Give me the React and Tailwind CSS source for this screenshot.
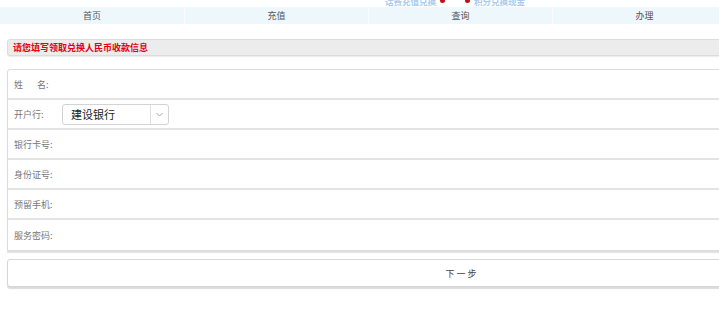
import React from "react";

const font = { fontFamily: '"Noto Sans CJK SC", "Noto Sans", sans-serif' };

const navItems = ["首页", "充值", "查询", "办理"];

const rows = [
  { label: "姓名:" },
  { label: "开户行:", select: true },
  { label: "银行卡号:" },
  { label: "身份证号:" },
  { label: "预留手机:" },
  { label: "服务密码:" },
];

// Bank select
const BankSelect = () => (
  <div className="ml-[5px] flex h-[21px] w-[107px] items-center rounded-[3px] border border-[#d3d3d3] bg-white">
    <span className="flex-1 pl-[8px] text-[11px] leading-none text-[#222]">建设银行</span>
    <span className="flex h-full w-[18px] items-center justify-center border-l border-[#dedede]">
      <svg width="7" height="5" viewBox="0 0 7 5" fill="none" stroke="#9a9a9a" strokeWidth="0.9">
        <path d="M0.5 1 L3.5 4 L6.5 1" />
      </svg>
    </span>
  </div>
);

export default function App() {
  return (
    <div className="relative h-[316px] w-[719px] overflow-hidden bg-white" style={font}>
      {/* banner remnant */}
      <div className="h-[7px] overflow-hidden">
        <div className="-mt-[5px] ml-[385px] flex h-[10px] w-[150px] items-end gap-[4px] text-[8.5px] font-bold leading-none text-[#a9cbed]">
          <span className="whitespace-nowrap">话费充值兑换</span>
          <span className="mb-[2px] h-[5px] w-[5px] rounded-full bg-[#c0101a]" />
          <span className="w-[12px]" />
          <span className="mb-[2px] h-[5px] w-[5px] rounded-full bg-[#c0101a]" />
          <span className="whitespace-nowrap">积分兑换现金</span>
        </div>
      </div>

      {/* nav */}
      <div className="flex h-[17px] w-[736px] bg-[#eef7fc]">
        {navItems.map((item, i) => (
          <div
            key={item}
            className={`flex w-[184px] items-center justify-center text-[9px] leading-none text-[#555] ${
              i > 0 ? "border-l border-[#fafdff]" : ""
            }`}
          >
            {item}
          </div>
        ))}
      </div>

      <div className="w-[904px] pl-[7px] pt-[15px]">
        {/* header */}
        <div className="flex h-[17px] items-center rounded-l-[3px] border border-[#dcdcdc] bg-[#ececec] pl-[5px] shadow-[0_1px_1px_rgba(0,0,0,0.08)]">
          <span className="text-[9px] font-bold leading-none text-[#e60012]">请您填写领取兑换人民币收款信息</span>
        </div>

        {/* form */}
        <div className="mt-[13px] rounded-tl-[3px] border border-[#dcdcdc] bg-white shadow-[0_2px_1px_rgba(0,0,0,0.12)]">
          {rows.map((row, i) => (
            <div
              key={i}
              className={`flex h-[30px] items-center pl-[6px] ${
                i < rows.length - 1 ? "border-b-2 border-[#e3e3e3]" : ""
              }`}
            >
              {i === 0 ? (
                <span className="flex w-[43px] text-[9px] leading-none text-[#777]">
                  <span className="w-[23px]">姓</span>
                  <span>名:</span>
                </span>
              ) : (
                <span className="w-[43px] whitespace-nowrap text-[9px] leading-none text-[#777]">{row.label}</span>
              )}
              {row.select && <BankSelect />}
            </div>
          ))}
        </div>

        {/* next button */}
        <div className="mt-[8px] flex h-[28px] items-center justify-center rounded-l-[3px] border border-[#d6d6d6] bg-white pl-[13px] shadow-[0_2px_1px_rgba(0,0,0,0.14)]">
          <span className="text-[9px] leading-none tracking-[2px] text-[#444]">下一步</span>
        </div>
      </div>
    </div>
  );
}
